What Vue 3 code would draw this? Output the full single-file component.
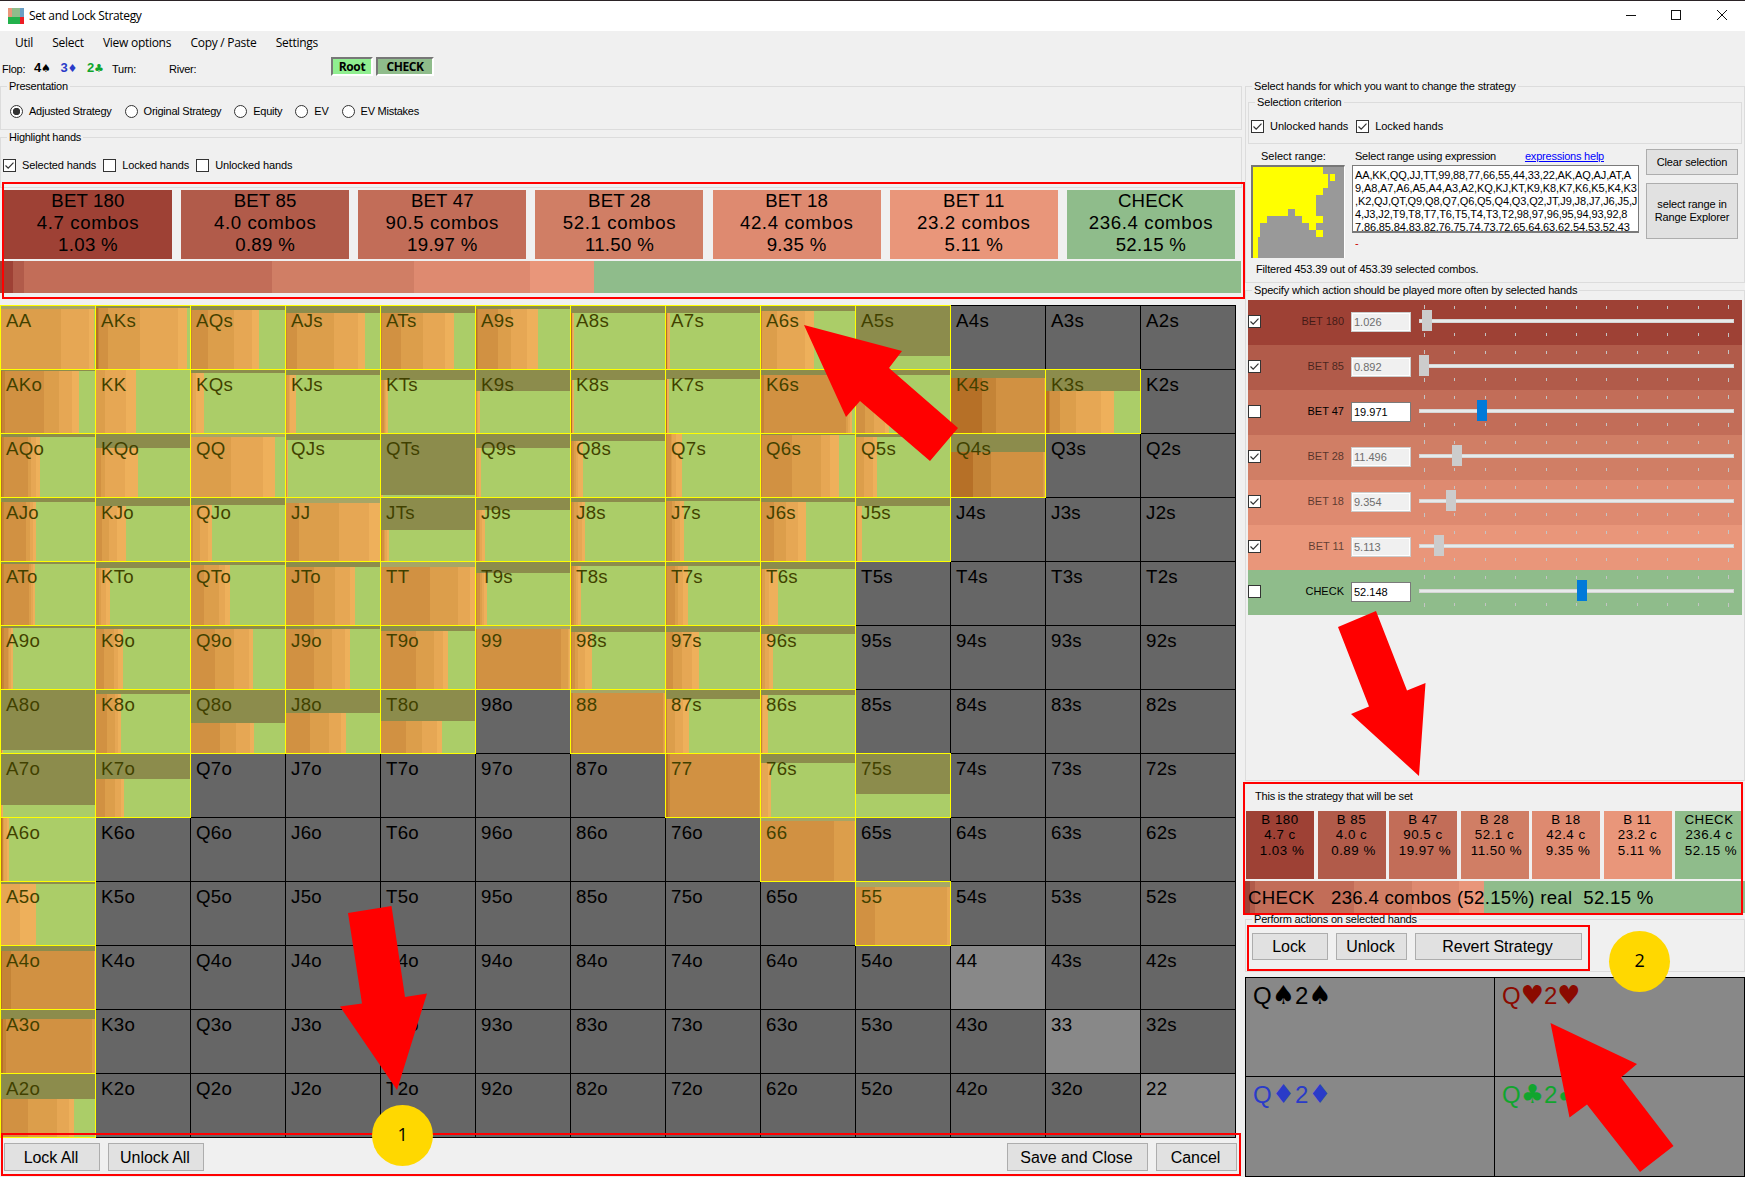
<template>
  <div class="window">
    <header class="titlebar">
      <svg class="app-icon" width="16" height="16" viewBox="0 0 16 16" shape-rendering="crispEdges">
        <rect width="4" height="9" fill="#e9967a" />
        <rect x="4" width="8" height="9" fill="#8fbc8b" />
        <rect x="12" width="4" height="9" fill="#6a9fc5" />
        <rect y="9" width="12" height="7" fill="#22b14c" />
        <rect x="12" y="9" width="4" height="7" fill="#ed1c24" />
      </svg>
      <span class="title">Set and Lock Strategy</span>
      <svg class="controls" width="110" height="30" viewBox="0 0 110 30" fill="none" stroke="#111" stroke-width="1">
        <path d="M5 15.5h10" />
        <rect x="50.5" y="10.5" width="9" height="9" />
        <path d="M96 10l10 10M106 10l-10 10" />
      </svg>
    </header>

    <nav class="menubar">
      <span v-for="item in menu" :key="item">{{ item }}</span>
    </nav>

    <div class="board">
      <span class="street flop">Flop:</span>
      <span class="card spade">4<i>♠</i></span>
      <span class="card diamond">3<i>♦</i></span>
      <span class="card club">2<i>♣</i></span>
      <span class="street turn">Turn:</span>
      <span class="street river">River:</span>
      <span class="node root">Root</span>
      <span class="node check">CHECK</span>
    </div>

    <main class="content">
      <section class="left">
        <fieldset class="presentation">
          <legend>Presentation</legend>
          <div class="options">
            <label v-for="(name, i) in views" :key="name"><span class="radio" :class="{ on: i === 0 }"></span>{{ name }}</label>
          </div>
        </fieldset>
        <fieldset class="highlight">
          <legend>Highlight hands</legend>
          <div class="options">
            <label v-for="(name, i) in highlights" :key="name">
              <span class="box"><svg v-if="i === 0" viewBox="0 0 11 11"><path d="M1.5 5.5l2.7 2.7 5.3-5.6" /></svg></span>{{ name }}
            </label>
          </div>
        </fieldset>

        <div class="summary">
          <div v-for="a in actions" :key="a.id" class="tile" :class="a.id">
            <div class="name">{{ a.name }}</div>
            <div>{{ a.combos }} combos</div>
            <div class="pct">{{ a.pct }} %</div>
          </div>
        </div>
        <div class="strip">
          <div v-for="a in actions" :key="a.id" :class="a.id" :style="{ width: a.pct + '%' }"></div>
        </div>

        <div class="matrix">
          <div
            v-for="c in cells"
            :key="c.hand"
            class="cell"
            :class="{ selected: c.data, pair: c.pair }"
          >
            <template v-if="c.data">
              <div class="missing" :style="{ height: c.data[0] + 'px' }"></div>
              <div class="bars">
                <div v-for="s in c.segments" :key="s.id" :class="s.id" :style="{ width: s.width + 'px' }"></div>
              </div>
            </template>
            <span class="hand">{{ c.hand }}</span>
          </div>
        </div>

        <footer class="footer">
          <button class="w96">Lock All</button>
          <button class="w96">Unlock All</button>
          <button class="save">Save and Close</button>
          <button class="cancel">Cancel</button>
        </footer>
      </section>

      <aside class="right">
        <fieldset class="selection">
          <legend>Select hands for which you want to change the strategy</legend>
          <fieldset class="criterion">
            <legend>Selection criterion</legend>
            <div class="options">
              <label v-for="name in ['Unlocked hands', 'Locked hands']" :key="name">
                <span class="box"><svg viewBox="0 0 11 11"><path d="M1.5 5.5l2.7 2.7 5.3-5.6" /></svg></span>{{ name }}
              </label>
            </div>
          </fieldset>
          <div class="range">
            <div class="range-map">
              <div class="caption">Select range:</div>
              <div class="map">
                <div v-for="c in cells" :key="c.hand" class="dot">
                  <div v-if="c.data" :class="{ partial: partial.includes(c.hand) }"></div>
                </div>
              </div>
            </div>
            <div class="expression">
              <div class="caption">Select range using expression <a>expressions help</a></div>
              <div class="textarea"><div v-for="line in rangeText" :key="line">{{ line }}</div></div>
              <div class="error">-</div>
            </div>
            <div class="range-buttons">
              <button class="clear">Clear selection</button>
              <button class="explorer">select range in<br>Range Explorer</button>
            </div>
          </div>
          <div class="filtered">Filtered 453.39 out of 453.39 selected combos.</div>
        </fieldset>

        <fieldset class="adjust">
          <legend>Specify which action should be played more often by selected hands</legend>
          <div v-for="a in actions" :key="a.id" class="slider-row" :class="[a.id, { off: a.locked }]">
            <span class="box"><svg v-if="a.locked" viewBox="0 0 11 11"><path d="M1.5 5.5l2.7 2.7 5.3-5.6" /></svg></span>
            <span class="slider-name">{{ a.name }}</span>
            <span class="value">{{ a.value }}</span>
            <div class="slider">
              <div class="ticks"><i v-for="n in 11" :key="n"></i></div>
              <div class="track"></div>
              <div class="ticks bottom"><i v-for="n in 11" :key="n"></i></div>
              <div class="thumb" :style="{ left: a.thumb + 'px' }"></div>
            </div>
          </div>
        </fieldset>

        <section class="result">
          <div class="result-title">This is the strategy that will be set</div>
          <div class="result-tiles">
            <div v-for="a in actions" :key="a.id" class="tile" :class="a.id">
              <div>{{ a.short }}</div>
              <div>{{ a.combos }} c</div>
              <div class="pct">{{ a.pct }} %</div>
            </div>
          </div>
          <div class="strip">
            <div v-for="a in actions" :key="a.id" :class="a.id" :style="{ width: a.pct + '%' }"></div>
            <span class="strip-text">{{ resultText }}</span>
          </div>
        </section>

        <fieldset class="perform">
          <legend>Perform actions on selected hands</legend>
          <div class="perform-buttons">
            <button class="lock">Lock</button>
            <button class="unlock">Unlock</button>
            <button class="revert">Revert Strategy</button>
          </div>
        </fieldset>

        <div class="suits">
          <div v-for="s in suits" :key="s.id" :class="s.id">Q<i>{{ s.glyph }}</i>2<i>{{ s.glyph }}</i></div>
        </div>
      </aside>
    </main>

    <!-- tutorial annotations on top of the window -->
    <div class="frame frame-summary"></div>
    <div class="frame frame-footer"></div>
    <div class="frame frame-result"></div>
    <div class="frame frame-perform"></div>
    <svg class="arrows" width="1745" height="1177" viewBox="0 0 1745 1177" fill="#f00">
      <polygon v-for="p in arrows" :key="p" :points="p" />
    </svg>
    <div class="badge badge-one">1</div>
    <div class="badge badge-two">2</div>
  </div>
</template>

<script setup>
const menu = ['Util', 'Select', 'View options', 'Copy / Paste', 'Settings']
const views = ['Adjusted Strategy', 'Original Strategy', 'Equity', 'EV', 'EV Mistakes']
const highlights = ['Selected hands', 'Locked hands', 'Unlocked hands']

const actions = [
  { id: 'b180', name: 'BET 180', short: 'B 180', combos: '4.7', pct: '1.03', value: '1.026', locked: true, thumb: 3 },
  { id: 'b85', name: 'BET 85', short: 'B 85', combos: '4.0', pct: '0.89', value: '0.892', locked: true, thumb: 0 },
  { id: 'b47', name: 'BET 47', short: 'B 47', combos: '90.5', pct: '19.97', value: '19.971', locked: false, thumb: 58 },
  { id: 'b28', name: 'BET 28', short: 'B 28', combos: '52.1', pct: '11.50', value: '11.496', locked: true, thumb: 33 },
  { id: 'b18', name: 'BET 18', short: 'B 18', combos: '42.4', pct: '9.35', value: '9.354', locked: true, thumb: 27 },
  { id: 'b11', name: 'BET 11', short: 'B 11', combos: '23.2', pct: '5.11', value: '5.113', locked: true, thumb: 15 },
  { id: 'chk', name: 'CHECK', short: 'CHECK', combos: '236.4', pct: '52.15', value: '52.148', locked: false, thumb: 158 }
]
const resultText = 'CHECK   236.4 combos (52.15%) real  52.15 %'

// hand: [missing height, right edge of each bet size]; check takes the rest
const strategy = {
  AA: [3, 0, 0, 0, 60, 88, 93], AKs: [2, 2, 3, 12, 44, 82, 91], AQs: [4, 0, 1, 17, 43, 61, 68],
  AJs: [7, 0, 1, 11, 48, 72, 79], ATs: [7, 0, 1, 20, 42, 64, 73], A9s: [3, 1, 2, 22, 35, 51, 62],
  A8s: [7, 1, 1, 1, 1, 2, 3], A7s: [7, 1, 1, 1, 1, 2, 4], A6s: [5, 0, 1, 1, 16, 44, 53], A5s: [50, 0, 0, 0, 0, 0, 0],
  AKo: [1, 1, 4, 43, 58, 71, 78], KK: [0, 0, 0, 0, 9, 30, 40], KQs: [3, 0, 0, 1, 2, 5, 13],
  KJs: [5, 0, 0, 1, 3, 4, 10], KTs: [10, 0, 0, 3, 4, 5, 7], K9s: [21, 0, 0, 1, 1, 2, 4],
  K8s: [10, 1, 1, 1, 1, 2, 3], K7s: [9, 1, 1, 1, 1, 1, 3], K6s: [5, 0, 3, 85, 87, 89, 91],
  K5s: [5, 0, 0, 9, 18, 29, 33], K4s: [8, 31, 45, 93, 94, 94, 94], K3s: [21, 3, 4, 14, 30, 55, 68],
  AQo: [3, 1, 3, 27, 30, 35, 39], KQo: [14, 0, 0, 5, 9, 29, 42], QQ: [3, 0, 0, 0, 40, 72, 84],
  QJs: [6, 0, 0, 1, 1, 1, 2], QTs: [61, 0, 0, 0, 0, 1, 2], Q9s: [14, 0, 0, 1, 1, 3, 5],
  Q8s: [7, 0, 1, 3, 5, 7, 12], Q7s: [0, 0, 1, 5, 6, 10, 16], Q6s: [1, 0, 1, 31, 60, 69, 78],
  Q5s: [3, 0, 0, 1, 8, 17, 21], Q4s: [18, 22, 40, 92, 93, 94, 94],
  AJo: [4, 1, 3, 25, 29, 32, 35], KJo: [8, 0, 0, 6, 13, 21, 30], QJo: [7, 0, 0, 2, 9, 17, 21],
  JJ: [5, 0, 0, 13, 53, 83, 94], JTs: [32, 0, 1, 3, 4, 6, 8], J9s: [12, 0, 1, 3, 4, 6, 9],
  J8s: [4, 0, 1, 3, 7, 11, 14], J7s: [3, 0, 1, 6, 9, 14, 18], J6s: [4, 0, 1, 13, 25, 37, 45], J5s: [8, 1, 1, 1, 1, 2, 6],
  ATo: [2, 1, 3, 28, 30, 32, 34], KTo: [6, 0, 0, 3, 5, 10, 14], QTo: [3, 0, 0, 13, 28, 34, 39],
  JTo: [5, 0, 0, 28, 49, 64, 69], TT: [5, 0, 0, 49, 77, 89, 94], T9s: [11, 0, 1, 4, 6, 8, 11],
  T8s: [4, 0, 1, 3, 5, 7, 10], T7s: [4, 0, 1, 9, 12, 17, 22], T6s: [7, 0, 1, 1, 4, 8, 17],
  A9o: [2, 1, 3, 7, 8, 10, 12], K9o: [3, 0, 0, 8, 18, 22, 27], Q9o: [3, 0, 0, 24, 43, 58, 62],
  J9o: [3, 0, 0, 28, 46, 59, 64], T9o: [5, 0, 0, 35, 53, 62, 67], 99: [3, 0, 1, 85, 92, 93, 94],
  '98s': [6, 0, 1, 4, 7, 14, 21], '97s': [6, 0, 0, 7, 16, 26, 33], '96s': [8, 0, 1, 1, 4, 8, 12],
  A8o: [60, 0, 0, 1, 1, 1, 2], K8o: [4, 0, 0, 11, 19, 22, 25], Q8o: [33, 0, 0, 29, 45, 59, 63],
  J8o: [23, 0, 0, 24, 43, 55, 60], T8o: [31, 0, 0, 25, 41, 56, 61], 88: [3, 0, 2, 92, 93, 94, 94],
  '87s': [9, 0, 1, 1, 9, 17, 23], '86s': [5, 0, 1, 1, 1, 2, 7],
  A7o: [51, 0, 0, 0, 0, 1, 2], K7o: [25, 0, 0, 9, 19, 25, 28], 77: [0, 2, 4, 93, 94, 94, 94],
  '76s': [9, 0, 0, 0, 1, 7, 10], '75s': [40, 0, 0, 0, 0, 0, 0],
  A6o: [0, 1, 2, 2, 3, 6, 8], 66: [3, 0, 0, 73, 93, 94, 94],
  A5o: [2, 0, 0, 0, 0, 19, 35], 55: [5, 0, 0, 19, 91, 94, 94],
  A4o: [5, 1, 10, 93, 93, 94, 94], A3o: [9, 2, 5, 91, 94, 94, 94], A2o: [25, 1, 2, 27, 56, 68, 73]
}
const partial = ['K4s', 'K3s', 'Q4s', 'A4o', 'A3o', 'A2o']

const ranks = 'AKQJT98765432'
const cells = []
for (let r = 0; r < 13; r++) {
  for (let c = 0; c < 13; c++) {
    const hand = r === c ? ranks[r] + ranks[c] : r < c ? ranks[r] + ranks[c] + 's' : ranks[c] + ranks[r] + 'o'
    const data = strategy[hand]
    const edges = data ? [...data.slice(1), 94] : []
    const segments = edges.map((edge, i) => ({ id: actions[i].id, width: edge - (i ? edges[i - 1] : 0) }))
    cells.push({ hand, data, segments, pair: r === c })
  }
}

const rangeText = [
  'AA,KK,QQ,JJ,TT,99,88,77,66,55,44,33,22,AK,AQ,AJ,AT,A',
  '9,A8,A7,A6,A5,A4,A3,A2,KQ,KJ,KT,K9,K8,K7,K6,K5,K4,K3',
  ',K2,QJ,QT,Q9,Q8,Q7,Q6,Q5,Q4,Q3,Q2,JT,J9,J8,J7,J6,J5,J',
  '4,J3,J2,T9,T8,T7,T6,T5,T4,T3,T2,98,97,96,95,94,93,92,8',
  '7,86,85,84,83,82,76,75,74,73,72,65,64,63,62,54,53,52,43'
]

const suits = [
  { id: 'spade', glyph: '♠' },
  { id: 'heart', glyph: '♥' },
  { id: 'diamond', glyph: '♦' },
  { id: 'club', glyph: '♣' }
]

const arrows = [
  '804,325 902,351 889,368 958,428 930,461 860,401 846,417',
  '348,913 391.5,906 405,997 427,993.5 397,1090 340,1006.5 362,1003.5',
  '1338,627 1376,611 1407,690.5 1425.5,683 1419,776 1351,714 1369,706.5',
  '1550.5,1023 1637,1064 1621,1077.5 1673.5,1146 1640,1172 1587,1104.5 1569.5,1117.5'
]
</script>

<style>
body {
  background: #f0f0f0;
  overflow: hidden;
}
</style>

<style scoped>
.window {
  position: relative;
  width: 1745px;
  height: 1177px;
  overflow: hidden;
  box-sizing: border-box;
  border-top: 1px solid #2b2326;
  background: #f0f0f0;
  color: #000;
  font: 11px/13px "Liberation Sans", Arial, sans-serif;
  letter-spacing: -0.25px;
}
.window * {
  box-sizing: border-box;
}
.b180 { background: #9e4135; }
.b85 { background: #b15b4a; }
.b47 { background: #c26d58; }
.b28 { background: #d07e65; }
.b18 { background: #de8a70; }
.b11 { background: #e9967a; }
.chk { background: #8fbc8b; }

.titlebar {
  display: flex;
  align-items: center;
  height: 30px;
  padding-left: 8px;
  background: #fff;
  font: 12px/16px "Open Sans", "Noto Sans", sans-serif;
}
.title {
  margin-left: 5px;
  letter-spacing: -0.35px;
}
.controls {
  margin: -2px 14px 0 auto;
}
.menubar {
  display: flex;
  gap: 19.3px;
  height: 24px;
  padding-left: 15px;
  font: 12px/24px "Open Sans", "Noto Sans", sans-serif;
  letter-spacing: -0.28px;
}
.board {
  display: flex;
  height: 25px;
  padding-left: 2px;
}
.street {
  line-height: 28px;
}
.flop { width: 32px; }
.turn { width: 57px; }
.river { width: 162px; }
.card {
  width: 26.5px;
  font-size: 13px;
  font-weight: bold;
  line-height: 26px;
  white-space: nowrap;
}
.card i {
  font: normal 11px "DejaVu Sans", sans-serif;
}
.card.club { width: 25px; }
.node {
  height: 19px;
  margin: 2px 3px 0 0;
  border: 2px solid;
  border-color: #777 #fff #fff #777;
  font: bold 12px/16px "Open Sans", sans-serif;
  letter-spacing: -0.4px;
  text-align: center;
}
.root {
  width: 42px;
  background: #90ee90;
}
.node.check {
  width: 58px;
  background: #8fbc8b;
}

.content {
  display: flex;
  gap: 3px;
}
.left {
  width: 1242px;
}
.right {
  width: 500px;
  letter-spacing: -0.15px;
}
fieldset {
  margin: 0;
  padding: 0 2px;
  min-width: 0;
  border: 1px solid #dcdcdc;
}
legend {
  margin-left: 4px;
  padding: 0 2px;
  height: 13px;
}
.presentation { height: 50px; }
.highlight {
  height: 57px;
  margin-top: 1px;
}
.options {
  display: flex;
  align-items: center;
}
.options label {
  display: flex;
  align-items: center;
  white-space: nowrap;
}
.presentation .options {
  gap: 13px;
  padding: 12px 0 0 7px;
}
.highlight .options {
  gap: 7px;
  padding: 15px 0 0 0;
  letter-spacing: -0.12px;
}
.radio {
  width: 13px;
  height: 13px;
  margin-right: 6px;
  border: 1px solid #333;
  border-radius: 50%;
  background: #fff;
}
.radio.on {
  background: radial-gradient(circle, #333 0 3.4px, #fff 4px);
}
.box {
  flex: none;
  width: 13px;
  height: 13px;
  margin-right: 6px;
  border: 1px solid #333;
  background: #fff;
}
.box svg {
  display: block;
  fill: none;
  stroke: #333;
  stroke-width: 1.2;
}

.summary {
  display: grid;
  grid-template-columns: repeat(7, 168px);
  column-gap: 9.17px;
  margin: 2px 0 2px 4px;
}
.summary .tile {
  height: 69px;
  font-size: 18.67px;
  line-height: 22px;
  letter-spacing: 0.6px;
  text-align: center;
}
.summary .name {
  letter-spacing: 0.15px;
}
.summary .pct {
  letter-spacing: 0.3px;
}
.strip {
  display: flex;
  height: 32px;
}
.left .strip {
  width: 1241px;
}

.matrix {
  display: grid;
  grid-template-columns: repeat(13, 95px);
  grid-template-rows: repeat(13, 64px);
  margin-top: 12px;
}
.cell {
  position: relative;
  display: flex;
  flex-direction: column;
  width: 96px;
  height: 65px;
  border: 1px solid #000;
  background: #666;
}
.cell.pair {
  background: #888;
}
.cell.selected {
  z-index: 1;
  border-color: #ff0;
}
.cell.selected::after {
  content: "";
  position: absolute;
  inset: 0;
  background: rgba(255, 255, 0, 0.25);
}
.missing {
  flex: none;
}
.bars {
  display: flex;
  flex: 1;
}
.hand {
  position: absolute;
  left: 5px;
  top: 4px;
  font-size: 18.67px;
  line-height: 22px;
  letter-spacing: 0.3px;
}

button {
  padding: 0;
  border: 1px solid #adadad;
  background: #e1e1e1;
  color: #000;
  font: inherit;
  letter-spacing: inherit;
}
.footer {
  display: flex;
  gap: 8px;
  padding: 6px 5px 0 4px;
}
.footer button,
.perform-buttons button {
  height: 28px;
  padding-right: 2px;
  font-size: 16px;
  letter-spacing: -0.05px;
}
.w96 { width: 96px; }
.footer .save {
  width: 141px;
  margin-left: auto;
}
.footer .cancel { width: 81px; }

.selection { height: 203px; }
.criterion {
  height: 48px;
  margin-top: 3px;
}
.criterion .options {
  gap: 8px;
  padding: 11px 0 0 0;
  letter-spacing: -0.05px;
}
.range {
  display: flex;
  height: 114px;
  padding: 5px 0 0 3px;
}
.range-map {
  width: 101px;
}
.caption {
  height: 16px;
  padding: 1px 0 0 10px;
  white-space: nowrap;
}
.range-map .caption {
  letter-spacing: 0;
}
.map {
  display: grid;
  grid-template-columns: repeat(13, 7px);
  grid-template-rows: repeat(13, 7px);
  width: 94px;
  height: 93px;
  border: 2px solid;
  border-color: #777 #fff #999 #777;
  border-width: 2px 1px 0 2px;
  background: #999;
}
.dot div {
  height: 7px;
  background: #ff0;
}
.dot .partial {
  width: 5px;
}
.expression {
  width: 287px;
  margin-right: 7px;
}
.expression .caption {
  display: flex;
  justify-content: space-between;
  padding: 1px 35px 0 3px;
  letter-spacing: -0.22px;
}
.caption a {
  color: #00f;
  text-decoration: underline;
}
.textarea {
  height: 68px;
  padding: 3px 2px 0;
  overflow: hidden;
  border: 1px solid #7a7a7a;
  border-bottom-width: 2px;
  background: #fff;
  white-space: pre;
  letter-spacing: -0.12px;
}
.error {
  margin: 4px 0 0 3px;
  color: #c00;
}
.range-buttons {
  display: flex;
  flex-direction: column;
  gap: 8px;
  width: 92px;
}
.clear { height: 26px; }
.explorer { height: 56px; }
.filtered {
  padding: 5px 0 0 8px;
  letter-spacing: -0.15px;
}

.adjust {
  height: 497px;
  margin-top: 1px;
}
.adjust legend {
  margin-bottom: 3px;
}
.slider-row {
  display: flex;
  align-items: flex-start;
  height: 45px;
}
.slider-row .box {
  margin: 15px 0 0;
}
.slider-name {
  width: 83px;
  margin-top: 15px;
  text-align: right;
  letter-spacing: 0;
}
.off .slider-name {
  color: rgba(0, 0, 0, 0.6);
}
.value {
  width: 60px;
  height: 20px;
  margin: 12px 8px 0 7px;
  padding: 3px 2px 0;
  border: 1px solid #7a7a7a;
  background: #fff;
  letter-spacing: 0;
}
.off .value {
  border-color: #ccc;
  background: #f0f0f0;
  box-shadow: inset 0 0 0 1px #fff;
  color: #6d6d6d;
}
.slider {
  position: relative;
  width: 315px;
  padding-top: 5px;
}
.ticks {
  display: flex;
  justify-content: space-between;
  align-items: flex-end;
  height: 4px;
  padding: 0 5px;
}
.ticks i {
  width: 1px;
  height: 3px;
  background: #c4c4c4;
}
.ticks i:first-child,
.ticks i:last-child {
  height: 4px;
}
.ticks.bottom {
  align-items: flex-start;
  margin-top: 10px;
}
.track {
  height: 4px;
  margin-top: 10px;
  border: 1px solid #d6d6d6;
  background: #e7eaea;
}
.thumb {
  position: absolute;
  top: 10px;
  width: 10px;
  height: 21px;
  background: #007ad9;
}
.off .thumb {
  background: #ccc;
}

.result-title {
  height: 30px;
  padding: 9px 0 0 10px;
  letter-spacing: -0.2px;
}
.result-tiles {
  display: flex;
  gap: 3.5px;
  padding-left: 1px;
}
.result-tiles .tile {
  flex: none;
  width: 68px;
  height: 68px;
  padding-top: 1px;
  font-size: 13.33px;
  line-height: 15.3px;
  letter-spacing: 0.5px;
  text-align: center;
}
.result-tiles .pct {
  padding-left: 4px;
}
.result .strip {
  position: relative;
  margin-top: 2px;
}
.strip-text {
  position: absolute;
  left: 3px;
  top: 6px;
  font-size: 18.67px;
  line-height: 22px;
  letter-spacing: 0.27px;
  white-space: pre;
}
.perform {
  height: 59px;
  letter-spacing: -0.2px;
}
.perform-buttons {
  display: flex;
  gap: 8px;
  padding: 7px 0 0 4px;
}
.perform-buttons button { height: 27px; }
.lock { width: 76px; }
.unlock { width: 71px; }
.revert { width: 167px; }

.suits {
  display: grid;
  grid-template-columns: 248px 249px;
  grid-template-rows: 98px 99px;
  gap: 1px;
  width: 500px;
  margin-top: 5px;
  padding: 1px;
  background: #000;
}
.suits div {
  padding: 4px 0 0 7px;
  background: #888;
  font-size: 24px;
  line-height: 28px;
  letter-spacing: 0;
}
.suits i {
  font: normal 26px/20px "DejaVu Sans", sans-serif;
}
.spade { color: #000; }
.heart { color: #8b0a00; }
.diamond { color: #2a3bc8; }
.club { color: #11a52e; }

.frame {
  position: absolute;
  z-index: 2;
  border: 2px solid #f00;
}
.frame-summary {
  left: 2px;
  top: 181px;
  width: 1243px;
  height: 117px;
}
.frame-footer {
  left: 1px;
  top: 1132px;
  width: 1240px;
  height: 43px;
}
.frame-result {
  left: 1243px;
  top: 781px;
  width: 500px;
  height: 133px;
}
.frame-perform {
  left: 1247px;
  top: 924px;
  width: 343px;
  height: 46px;
}
.arrows {
  position: absolute;
  z-index: 2;
  left: 0;
  top: -1px;
}
.badge {
  position: absolute;
  z-index: 3;
  width: 61px;
  height: 61px;
  border-radius: 50%;
  background: #ffd800;
  font: 18px/59px "Open Sans", sans-serif;
  text-align: center;
}
.badge-one {
  left: 372px;
  top: 1104px;
}
.badge-two {
  left: 1609px;
  top: 930px;
}
</style>
